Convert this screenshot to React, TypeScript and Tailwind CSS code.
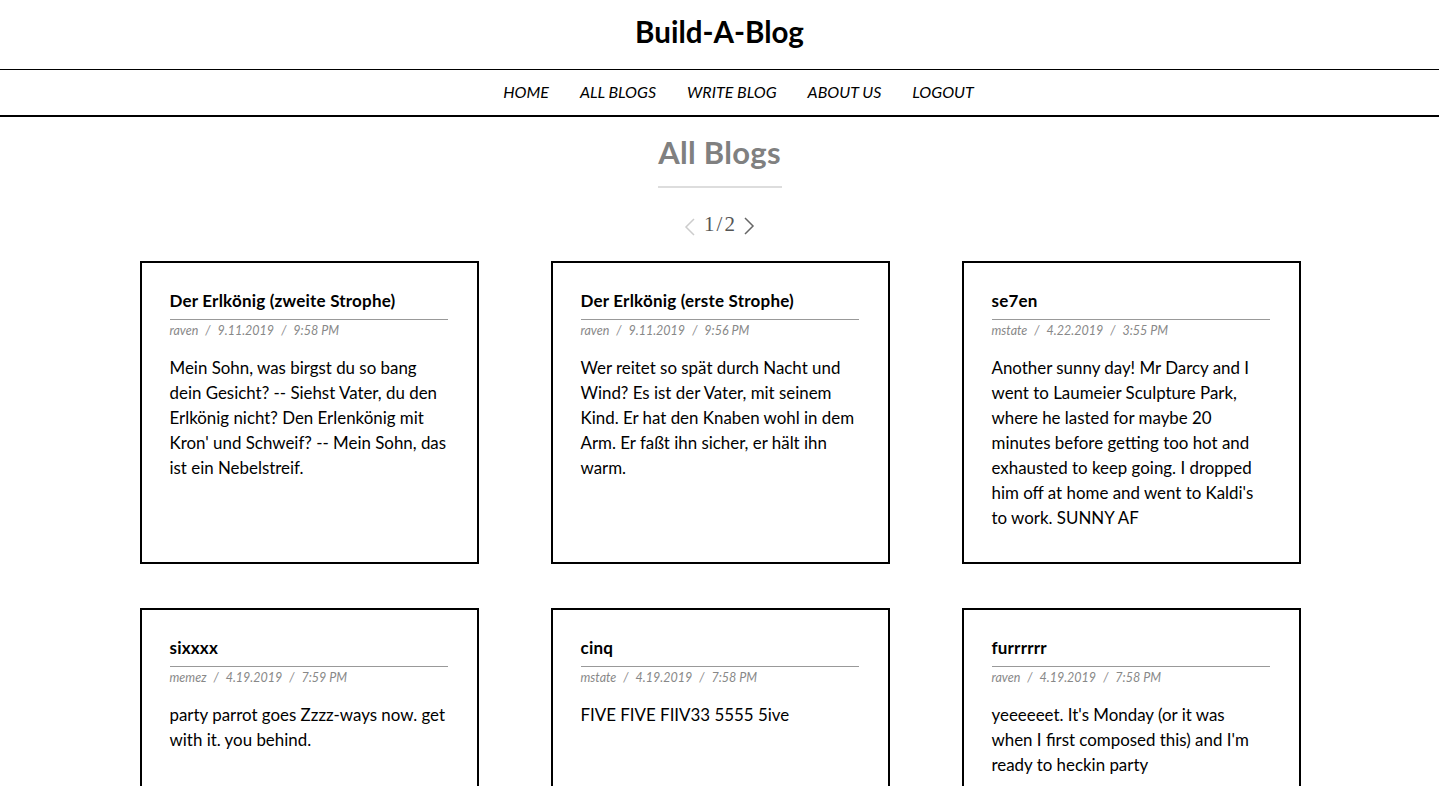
import React from "react";

const posts = [
  {
    id: 1,
    title: "Der Erlkönig (zweite Strophe)",
    author: "raven",
    date: "9.11.2019",
    time: "9:58 PM",
    body: "Mein Sohn, was birgst du so bang dein Gesicht? -- Siehst Vater, du den Erlkönig nicht? Den Erlenkönig mit Kron' und Schweif? -- Mein Sohn, das ist ein Nebelstreif.",
  },
  {
    id: 2,
    title: "Der Erlkönig (erste Strophe)",
    author: "raven",
    date: "9.11.2019",
    time: "9:56 PM",
    body: "Wer reitet so spät durch Nacht und Wind? Es ist der Vater, mit seinem Kind. Er hat den Knaben wohl in dem Arm. Er faßt ihn sicher, er hält ihn warm.",
  },
  {
    id: 3,
    title: "se7en",
    author: "mstate",
    date: "4.22.2019",
    time: "3:55 PM",
    body: "Another sunny day! Mr Darcy and I went to Laumeier Sculpture Park, where he lasted for maybe 20 minutes before getting too hot and exhausted to keep going. I dropped him off at home and went to Kaldi's to work. SUNNY AF",
  },
  {
    id: 4,
    title: "sixxxx",
    author: "memez",
    date: "4.19.2019",
    time: "7:59 PM",
    body: "party parrot goes Zzzz-ways now. get with it. you behind.",
  },
  {
    id: 5,
    title: "cinq",
    author: "mstate",
    date: "4.19.2019",
    time: "7:58 PM",
    body: "FIVE FIVE FIIV33 5555 5ive",
  },
  {
    id: 6,
    title: "furrrrrr",
    author: "raven",
    date: "4.19.2019",
    time: "7:58 PM",
    body: "yeeeeeet. It's Monday (or it was when I first composed this) and I'm ready to heckin party",
  },
];

const navItems = ["HOME", "ALL BLOGS", "WRITE BLOG", "ABOUT US", "LOGOUT"];

function BlogCard({ post }: { post: (typeof posts)[number] }) {
  return (
    <div className="w-[339px] h-[303px] border-2 border-black pl-[28px] pr-[29px] pt-[28px] bg-white">
      <h3 className="text-[17px] leading-[20px] font-bold text-black pb-[8px] border-b border-[#999] tracking-[0.2px]">
        {post.title}
      </h3>
      <p className="mt-[3px] text-[12.5px] leading-[16px] italic text-[#888]">
        {post.author}
        <span className="mx-[7px]">/</span>
        {post.date}
        <span className="mx-[7px]">/</span>
        {post.time}
      </p>
      <p className="mt-[16px] text-[16.9px] leading-[25px] text-black">
        {post.body}
      </p>
    </div>
  );
}

export default function App() {
  return (
    <div className="min-h-screen bg-white text-black font-['Lato','Liberation_Sans',sans-serif]">
      {/* Site header */}
      <header className="h-[70px] flex items-center justify-center border-b border-black">
        <h1 className="text-[29.5px] font-bold leading-none -mt-[5px]">Build-A-Blog</h1>
      </header>

      {/* Nav */}
      <nav className="h-[47px] flex items-center justify-center gap-[31px] pl-[38px] pb-[2px] border-b-2 border-black">
        {navItems.map((item) => (
          <a key={item} href="#" className="text-[16px] italic text-black leading-none">
            {item}
          </a>
        ))}
      </nav>

      {/* Page heading */}
      <section className="flex flex-col items-center">
        <h2 className="mt-[17px] text-[31px] leading-[36px] font-bold text-[#808080] tracking-[0.3px]">All Blogs</h2>
        <div className="mt-[16px] w-[124px] h-[2px] bg-[#ddd]"></div>
        <div className="mt-[24px] h-[24px] flex items-center gap-[6px] text-[#555]">
          <svg width="12" height="18" viewBox="0 0 12 18" className="mt-[6px]">
            <polyline points="10,1 2,9 10,17" fill="none" stroke="#ccc" strokeWidth="1.5" />
          </svg>
          <span className="text-[21px] font-light leading-none font-['Liberation_Serif',serif] tracking-[2px] pl-[2px]">1/2</span>
          <svg width="12" height="18" viewBox="0 0 12 18" className="mt-[4px]">
            <polyline points="2,1 10,9 2,17" fill="none" stroke="#666" strokeWidth="1.5" />
          </svg>
        </div>
      </section>

      {/* Cards */}
      <main className="mt-[25px] pl-[1px] grid grid-cols-[repeat(3,339px)] justify-center gap-x-[72px] gap-y-[44px] pb-[40px]">
        {posts.map((p) => (
          <BlogCard key={p.id} post={p} />
        ))}
      </main>
    </div>
  );
}
